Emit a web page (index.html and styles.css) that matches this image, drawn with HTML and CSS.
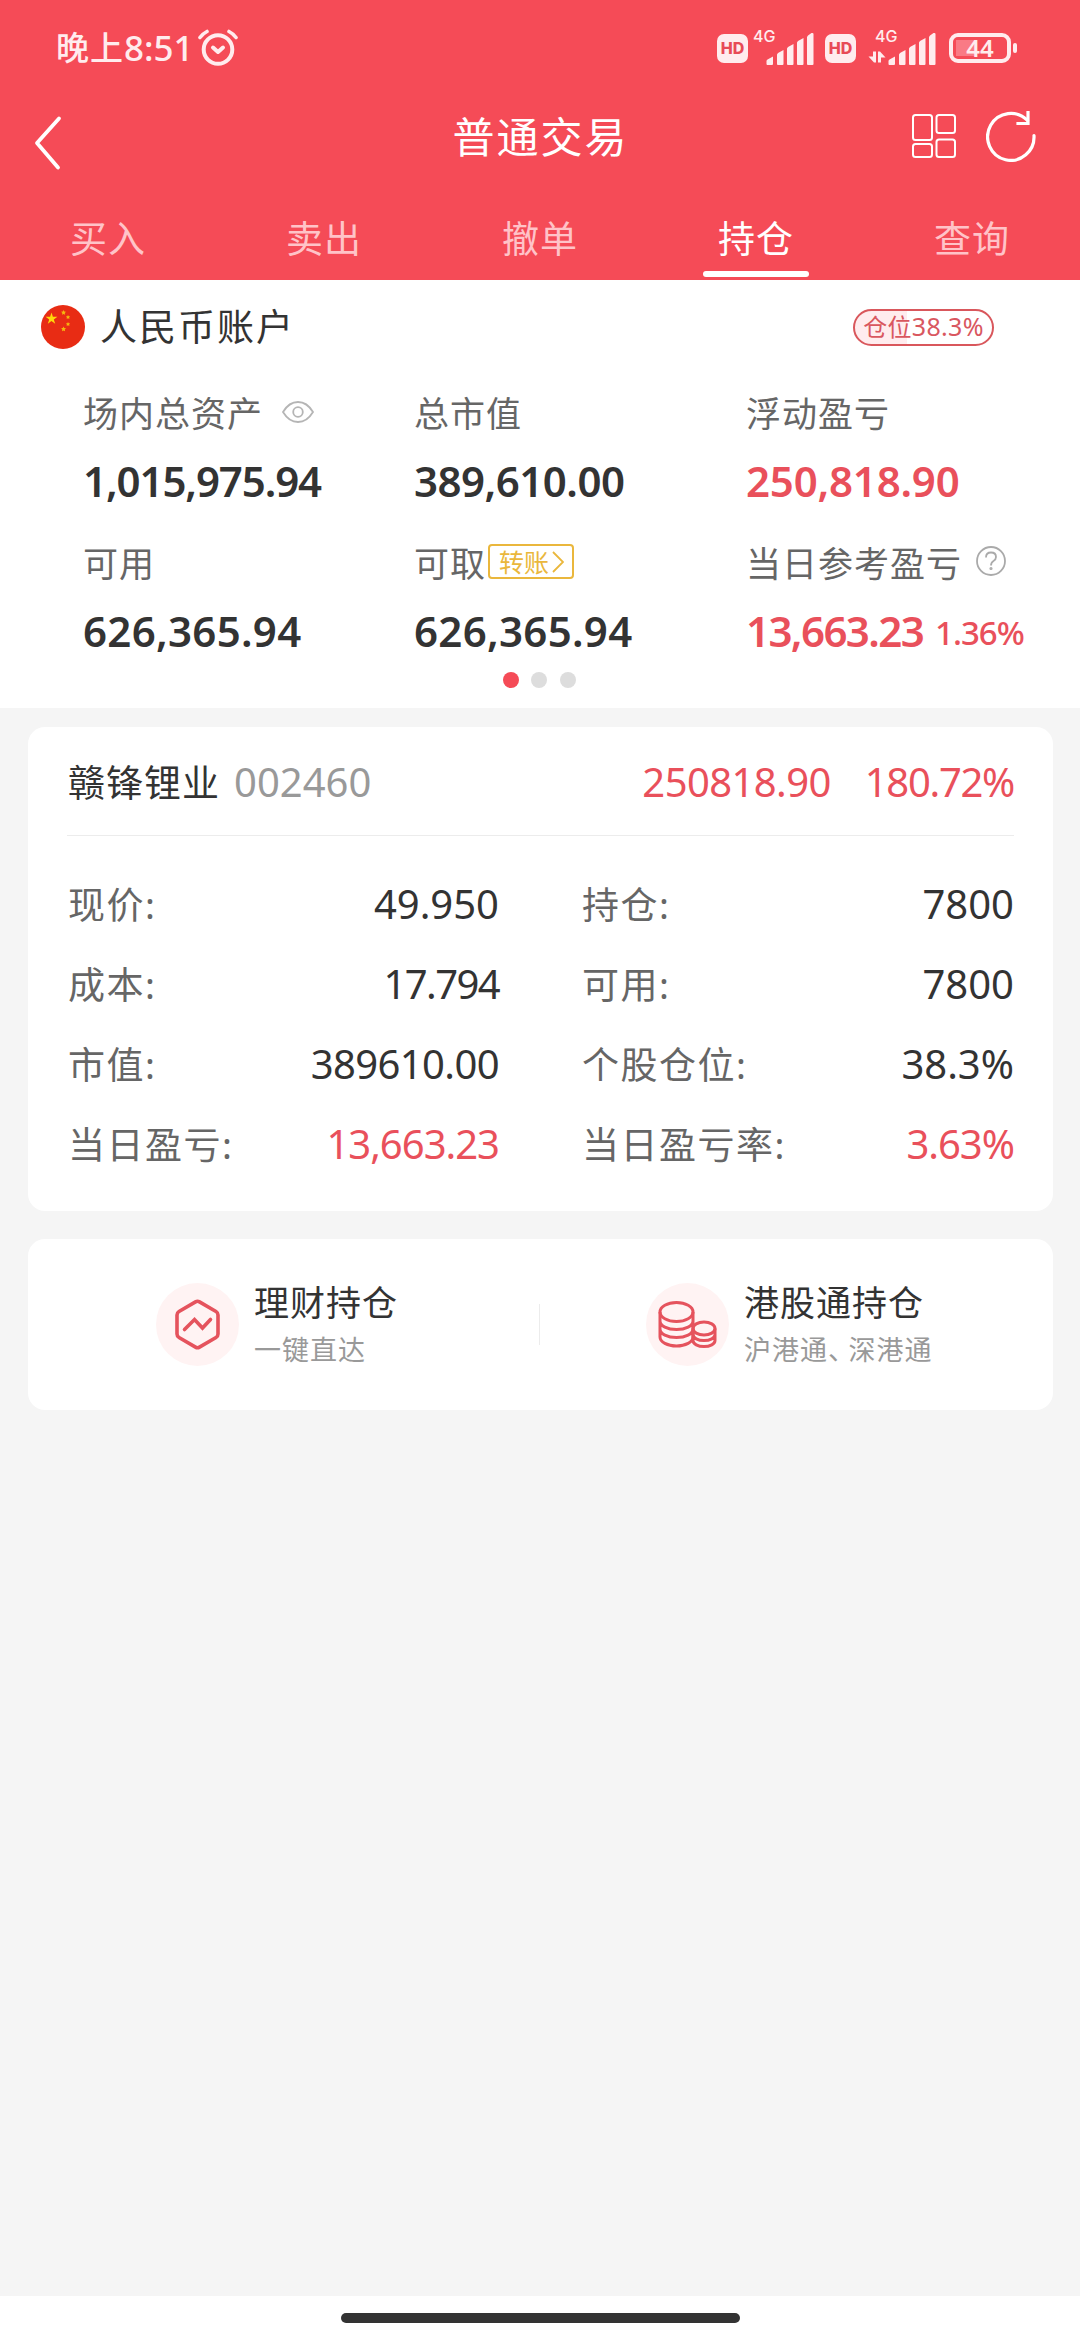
FILE: index.html
```html
<!DOCTYPE html>
<html lang="zh-CN">

<head>
  <meta charset="utf-8">
  <title>普通交易</title>
  <link rel="stylesheet" href="styles.css">
</head>

<body>
  <header class="header">
    <div class="status">
      <span class="time">晚上<span class="clock">8:51</span></span>
      <svg class="alarm" width="40" height="38" viewBox="0 0 40 38" fill="none" stroke="#ffecee" stroke-width="4" stroke-linecap="round">
        <circle cx="20" cy="20.500" r="14.300"/>
        <path d="M2 8.500Q5 4.500 9 2.500M31 2.500Q35 4.500 38 8.500" stroke-width="3.600"/>
        <path d="M15 18.500l5 4.500 5-4.500" stroke-linejoin="round"/>
      </svg>
      <div class="status-right">
        <span class="hd">HD</span>
        <svg class="signal" width="62" height="48" viewBox="0 -6 62 48" fill="#ffecee">
          <text class="net" x="0" y="12">4G</text>
          <path d="M13.500 34v-3q0-1 1-1.500l5.500-3v7.500q0 1-1 1h-4.500q-1 0-1-1zM24 34v-9.500l1-1.500 5.500-3V34q0 1-1 1H25q-1 0-1-1zM34 34V18.500l1-1.500 5.500-3V34q0 1-1 1H35q-1 0-1-1zM44 34V12.500l1-1.500 5.500-3V34q0 1-1 1H45q-1 0-1-1zM54 34V7l1-1.500 3.500-2.500q2-.5 2 1V34q0 1-1 1H55q-1 0-1-1z"/>
        </svg>
        <span class="hd hd-second">HD</span>
        <svg class="signal" width="70" height="48" viewBox="-8 -6 70 48" fill="#ffecee">
          <text class="net" x="0" y="12">4G</text>
          <path d="M-2 21.500h3v11h-2l-5.500-6h4.500zM3 32.500v-11h2l5.500 6H6v5z"/>
          <path d="M13.500 34v-3q0-1 1-1.500l5.500-3v7.500q0 1-1 1h-4.500q-1 0-1-1zM24 34v-9.500l1-1.500 5.500-3V34q0 1-1 1H25q-1 0-1-1zM34 34V18.500l1-1.500 5.500-3V34q0 1-1 1H35q-1 0-1-1zM44 34V12.500l1-1.500 5.500-3V34q0 1-1 1H45q-1 0-1-1zM54 34V7l1-1.500 3.500-2.500q2-.5 2 1V34q0 1-1 1H55q-1 0-1-1z"/>
        </svg>
        <span class="battery">44</span>
        <span class="battery-tip"></span>
      </div>
    </div>

    <div class="nav">
      <svg class="back" width="30" height="56" viewBox="0 0 30 56" fill="none" stroke="#fff" stroke-width="3.800" stroke-linecap="round" stroke-linejoin="round">
        <path d="M26 3.500L4 28l21 24.500"/>
      </svg>
      <h1>普通交易</h1>
      <div class="nav-icons">
        <svg width="44" height="44" viewBox="0 0 44 44" fill="none" stroke="#fff" stroke-width="2">
          <rect x="1" y="1" width="19" height="25" rx="2.500"/>
          <rect x="1" y="30" width="19" height="13" rx="2.500"/>
          <rect x="24.500" y="1" width="18.500" height="18" rx="2.500"/>
          <rect x="24.500" y="25.500" width="18.500" height="17.500" rx="2.500"/>
        </svg>
        <svg width="50" height="52" viewBox="0 0 50 52" fill="none" stroke="#fff" stroke-width="3.200" stroke-linecap="round">
          <path d="M41.500 10.500A23.200 23.500 0 1 0 48 25.500"/>
          <path d="M42 2.500v11H32" stroke-linecap="square"/>
        </svg>
      </div>
    </div>

    <nav class="tabs">
      <a>买入</a>
      <a>卖出</a>
      <a>撤单</a>
      <a class="active">持仓</a>
      <a>查询</a>
    </nav>
  </header>

  <section class="account">
    <div class="account-head">
      <svg width="44" height="44" viewBox="0 0 44 44">
        <circle cx="22" cy="22" r="22" fill="#e82c14"/>
        <path fill="#ffd90a" d="M10.500 7.500l1.400 4.300h4.500l-3.600 2.600 1.400 4.400-3.700-2.700-3.700 2.700 1.400-4.400-3.600-2.600h4.500z"/>
        <g fill="#f5b80f">
          <path d="M22.500 5l.8 1.600 1.700.2-1.200 1.200.3 1.700-1.600-.8-1.500.8.300-1.700-1.200-1.200 1.700-.2z"/>
          <path d="M27 10l.7 1.300 1.500.2-1.100 1 .3 1.500-1.400-.7-1.300.7.200-1.500-1-1 1.500-.2z"/>
          <path d="M27 17l.7 1.300 1.500.2-1.100 1 .3 1.500-1.400-.7-1.300.7.200-1.500-1-1 1.500-.2z"/>
          <path d="M22.500 21.500l.8 1.600 1.700.2-1.200 1.200.3 1.700-1.600-.8-1.500.8.300-1.700-1.200-1.200 1.700-.2z"/>
        </g>
      </svg>
      <h2>人民币账户</h2>
      <span class="ratio">仓位<span class="ratio-num">38.3%</span></span>
    </div>

    <div class="assets">
      <div>
        <div class="label">场内总资产
          <svg class="eye" width="32" height="22" viewBox="0 0 32 22" fill="none" stroke="#b5b5b5" stroke-width="1.800">
            <path d="M1 11Q7 1 16 1t15 10Q25 21 16 21T1 11z"/>
            <circle cx="16" cy="11" r="4.800"/>
          </svg>
        </div>
        <div class="value v1">1,015,975.94</div>
      </div>
      <div>
        <div class="label">总市值</div>
        <div class="value v2">389,610.00</div>
      </div>
      <div>
        <div class="label">浮动盈亏</div>
        <div class="value v3 red">250,818.90</div>
      </div>
      <div>
        <div class="label">可用</div>
        <div class="value">626,365.94</div>
      </div>
      <div>
        <div class="label">可取<span class="transfer">转账<svg width="12" height="22" viewBox="0 0 12 22" fill="none" stroke="#eab73c" stroke-width="1.800"><path d="M1 1l10 10L1 21"/></svg></span></div>
        <div class="value">626,365.94</div>
      </div>
      <div>
        <div class="label">当日参考盈亏
          <svg class="help" width="30" height="30" viewBox="0 0 30 30" fill="none" stroke="#aaa" stroke-width="1.800">
            <circle cx="15" cy="15" r="14"/>
            <path d="M10 11.500q0-5 5-5t5 4.500q0 2.500-2.500 4-2.500 1.500-2.500 4.500"/>
            <circle cx="15" cy="22.500" r=".7"/>
          </svg>
        </div>
        <div class="value v6 red">13,663.23<small>1.36%</small></div>
      </div>
    </div>

    <div class="dots"><i class="on"></i><i></i><i></i></div>
  </section>

  <main>
    <section class="card stock">
      <div class="stock-head">
        <h3>赣锋锂业</h3>
        <span class="code">002460</span>
        <span class="profit red">250818.90</span>
        <span class="percent red">180.72%</span>
      </div>
      <div class="details">
        <div class="row"><span>现价:</span><b>49.950</b></div>
        <div class="row"><span>持仓:</span><b>7800</b></div>
        <div class="row"><span>成本:</span><b class="n2">17.794</b></div>
        <div class="row"><span>可用:</span><b>7800</b></div>
        <div class="row"><span>市值:</span><b class="n3">389610.00</b></div>
        <div class="row"><span>个股仓位:</span><b>38.3%</b></div>
        <div class="row"><span>当日盈亏:</span><b class="n5 red">13,663.23</b></div>
        <div class="row"><span>当日盈亏率:</span><b class="n6 red">3.63%</b></div>
      </div>
    </section>

    <section class="card links">
      <a class="link link-wealth">
        <svg width="83" height="83" viewBox="0 0 83 83" fill="none" stroke="#e5535d" stroke-width="3.600" stroke-linejoin="round">
          <circle cx="41.500" cy="41.500" r="41.500" fill="#fff3f3" stroke="none"/>
          <path d="M39.500 18.900q2-1.200 4 0l16.500 9.600q2 1.200 2 3.500v19q0 2.300-2 3.500l-16.500 9.600q-2 1.200-4 0L23 54.500q-2-1.200-2-3.500V32q0-2.300 2-3.500z"/>
          <path d="M28.500 46.500l10-10L46.500 45l8-8.500" stroke-linecap="round" stroke-linejoin="miter"/>
        </svg>
        <div>
          <h4>理财持仓</h4>
          <p>一键直达</p>
        </div>
      </a>
      <span class="split"></span>
      <a class="link link-hk">
        <svg width="83" height="83" viewBox="0 0 83 83" fill="none" stroke="#e5535d" stroke-width="3" stroke-linejoin="round">
          <circle cx="41.500" cy="41.500" r="41.500" fill="#fff3f3" stroke="none"/>
          <ellipse cx="30.500" cy="29" rx="16.500" ry="9.500"/>
          <path d="M14 29v25c0 5 7.500 9 16.500 9S47 59 47 54V29M14 38c0 5 7.500 8.500 16.500 8.500S47 43 47 38M14 46c0 5 7.500 8.500 16.500 8.500S47 51 47 46"/>
          <ellipse cx="58" cy="45.500" rx="11" ry="6.500"/>
          <path d="M47 45.500v12c0 3.500 5 6 11 6s11-2.500 11-6v-12M47 51.500c0 3.500 5 6 11 6s11-2.500 11-6"/>
        </svg>
        <div>
          <h4>港股通持仓</h4>
          <p>沪港通<span class="comma">、</span>深港通</p>
        </div>
      </a>
    </section>
  </main>

  <footer class="homebar"><span></span></footer>
</body>

</html>
```

FILE: styles.css
```css
html, body {
  margin: 0;
  padding: 0;
  height: 100%;
}

body {
  display: flex;
  flex-direction: column;
  background: #f5f5f5;
  color: #333;
  font-family: "Noto Sans", "Noto Sans CJK SC", sans-serif;
  font-size: 40px;
  white-space: nowrap;
}

h1, h2, h3, h4, p {
  margin: 0;
  font-weight: normal;
}

svg {
  display: block;
  flex: none;
}

.red {
  color: #e9505b;
}

/* header */
.header {
  height: 280px;
  background: #f54b57;
  color: #fff;
}

.status {
  display: flex;
  align-items: center;
  height: 96px;
  padding: 0 63px 0 56px;
  box-sizing: border-box;
  color: #ffecee;
}

.time {
  display: flex;
  align-items: center;
  font-size: 33px;
  font-weight: 500;
  letter-spacing: 1px;
  line-height: 94px;
}

.clock {
  font-size: 35px;
  letter-spacing: 0;
}

.alarm {
  margin-left: 4px;
}

.status-right {
  display: flex;
  align-items: center;
  margin-left: auto;
}

.hd {
  width: 31px;
  height: 29px;
  border-radius: 7px;
  background: #ffecee;
  color: #e84a56;
  font: 800 16px/29px Inter, sans-serif;
  text-align: center;
}

.hd-second {
  margin-left: 10px;
}

.signal {
  margin-left: 5px;
}

.signal + .hd-second + .signal {
  margin-left: 11px;
}

.net {
  font: 500 16px Inter, sans-serif;
}

.battery {
  width: 62px;
  height: 30px;
  margin-left: 12px;
  box-sizing: border-box;
  border: 4px solid #ffecee;
  border-radius: 9px;
  background: linear-gradient(#f97a85, #f97a85) 3px 3px / 19px 16px no-repeat;
  font: 600 24px/21px "Noto Sans", sans-serif;
  text-align: center;
}

.battery-tip {
  width: 4px;
  height: 10px;
  margin-left: 2px;
  border-radius: 2px;
  background: #ffecee;
}

.nav {
  display: flex;
  align-items: center;
  justify-content: space-between;
  height: 82px;
  padding: 0 44px 0 33px;
}

.back {
  margin: 12px 106px 0 0;
}

.nav h1 {
  font-size: 42px;
  letter-spacing: 2px;
  line-height: 82px;
}

.nav-icons {
  display: flex;
  align-items: center;
  gap: 30px;
  margin-top: -2px;
}

.tabs {
  display: flex;
  height: 82px;
  margin-top: 20px;
}

.tabs a {
  flex: 1;
  display: flex;
  flex-direction: column;
  align-items: center;
  color: #ffc3c8;
  font-size: 37px;
  letter-spacing: 1px;
  line-height: 82px;
}

.tabs .active {
  color: #fff;
}

.tabs .active::after {
  content: "";
  width: 106px;
  height: 6px;
  margin-top: -9px;
  border-radius: 3px;
  background: #fff;
}

/* account summary */
.account {
  height: 428px;
  padding-top: 25px;
  box-sizing: border-box;
  background: #fff;
}

.account-head {
  display: flex;
  align-items: center;
  height: 44px;
  padding: 0 86px 0 41px;
}

.account-head h2 {
  margin-left: 15px;
  font-size: 37px;
  letter-spacing: 2px;
  line-height: 42px;
}

.ratio {
  width: 141px;
  height: 37px;
  margin-left: auto;
  box-sizing: border-box;
  border: 2px solid #d9575c;
  border-radius: 19px;
  background: linear-gradient(90deg, #ffecee 38%, #fff 38%);
  color: #d9575f;
  font-size: 24px;
  letter-spacing: .300px;
  line-height: 31px;
  text-align: center;
}

.ratio-num {
  font-size: 25px;
}

.assets {
  display: grid;
  grid-template-columns: 331px 332px 1fr;
  row-gap: 29px;
  margin: 37px 0 0 83px;
}

.label {
  display: flex;
  align-items: center;
  height: 50px;
  color: #666;
  font-size: 35px;
  letter-spacing: 1px;
}

.eye {
  margin: 1px 0 0 19px;
}

.help {
  margin-left: 14px;
}

.transfer {
  display: flex;
  align-items: center;
  width: 86px;
  height: 35px;
  margin: 1px 0 0 2px;
  padding-left: 9px;
  box-sizing: border-box;
  border: 2px solid #eab73c;
  border-radius: 4px;
  color: #eab73c;
  font-size: 25px;
  letter-spacing: 0;
  line-height: 28px;
}

.transfer svg {
  margin-left: 3px;
}

.value {
  height: 50px;
  margin-top: 21px;
  font-size: 42px;
  font-weight: 600;
  line-height: 48px;
  letter-spacing: .300px;
}

.value small {
  margin-left: 12px;
  font-size: 33px;
  font-weight: 500;
  letter-spacing: -1px;
  vertical-align: 2px;
}

.v1 {
  letter-spacing: -1.100px;
}

.v2 {
  letter-spacing: -.500px;
}

.v3 {
  letter-spacing: -.200px;
}

.v6 {
  letter-spacing: -1.600px;
}

.dots {
  display: flex;
  justify-content: center;
  gap: 12.500px;
  margin-top: 15px;
  padding-right: 2px;
}

.dots i {
  width: 16px;
  height: 16px;
  border-radius: 50%;
  background: #ddd;
}

.dots .on {
  background: #f54b57;
}

/* cards */
main {
  flex: 1;
  padding: 19px 27px 0 28px;
}

.card {
  border-radius: 17px;
  background: #fff;
}

.stock {
  height: 484px;
  padding: 0 39px;
  box-sizing: border-box;
}

.stock-head {
  display: flex;
  align-items: center;
  height: 109px;
  box-sizing: border-box;
  border-bottom: 1px solid #ececec;
}

.stock-head h3 {
  font-size: 37px;
  letter-spacing: 1px;
  padding-left: 1px;
}

.code {
  margin-left: 14px;
  color: #999;
}

.profit {
  margin-left: auto;
  letter-spacing: -.600px;
}

.percent {
  margin-left: 34px;
  letter-spacing: -1.300px;
}

.details {
  display: grid;
  grid-template-columns: 432px 433px;
  justify-content: space-between;
  padding-top: 27px;
}

.row {
  display: flex;
  align-items: center;
  justify-content: space-between;
  height: 80px;
  padding-left: 1px;
}

.row span {
  color: #666;
  font-size: 37px;
  letter-spacing: 1.500px;
}

.row b {
  font-weight: normal;
}

.n2 {
  letter-spacing: -1.600px;
}

.n3 {
  letter-spacing: -.600px;
}

.n5, .n6 {
  letter-spacing: -1px;
}

.links {
  display: flex;
  align-items: center;
  height: 171px;
  margin-top: 28px;
}

.link {
  display: flex;
  align-items: center;
  box-sizing: border-box;
}

.link-wealth {
  width: 511px;
  padding-left: 128px;
}

.link-hk {
  padding-left: 106px;
}

.split {
  width: 1px;
  height: 41px;
  background: #ececec;
}

.link svg {
  margin-right: 15px;
}

.link h4 {
  font-size: 35px;
  letter-spacing: 1px;
  line-height: 50px;
}

.link p {
  color: #999;
  font-size: 27px;
  letter-spacing: 1px;
  line-height: 44px;
}

.comma {
  margin-right: 6px;
  font-feature-settings: "halt";
}

/* system gesture bar */
.homebar {
  height: 44px;
  padding-top: 17px;
  box-sizing: border-box;
  background: #fff;
}

.homebar span {
  display: block;
  width: 399px;
  height: 10px;
  margin: 0 auto;
  border-radius: 5px;
  background: #333;
}
```
